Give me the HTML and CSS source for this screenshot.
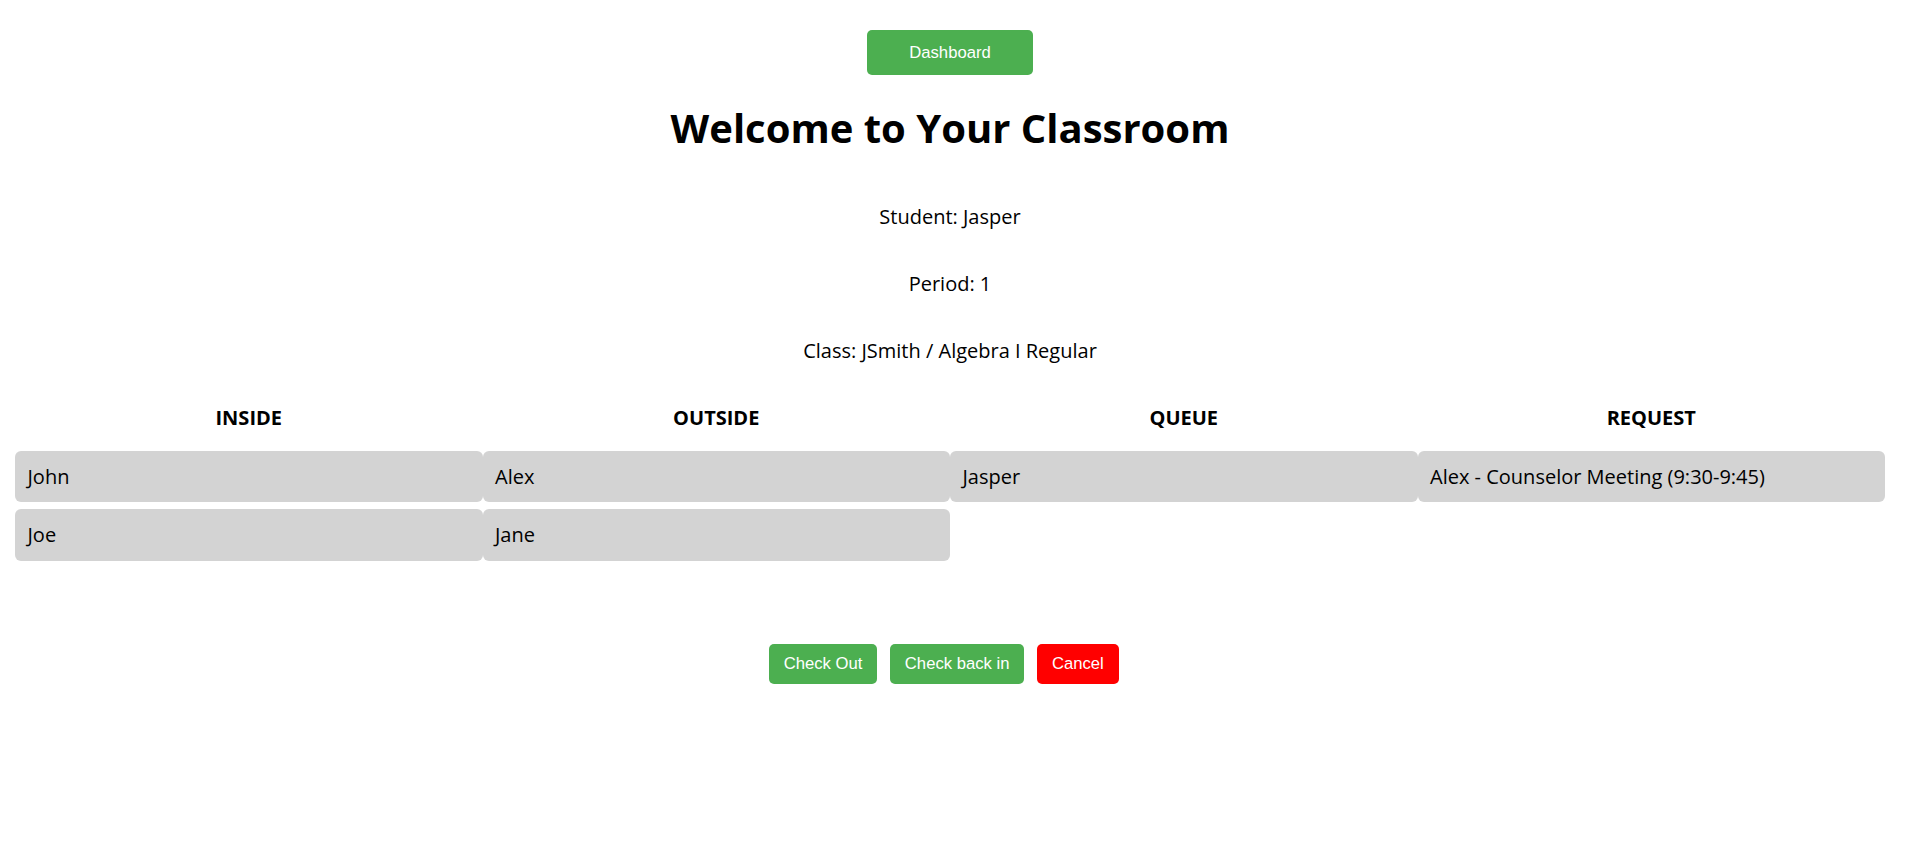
FILE: index.html
```html
<!DOCTYPE html>
<html lang="en">
<head>
<meta charset="utf-8">
<title>Welcome to Your Classroom</title>
<link rel="stylesheet" href="styles.css">
</head>
<body>
<div class="page">
  <div class="top">
    <button class="btn btn-green btn-dash">Dashboard</button>
  </div>
  <h1 class="title">Welcome to Your Classroom</h1>
  <div class="info">
    <p>Student: Jasper</p>
    <p>Period: 1</p>
    <p>Class: JSmith / Algebra I Regular</p>
  </div>
  <div class="board">
    <div class="col">
      <div class="col-head">INSIDE</div>
      <div class="cell">John</div>
      <div class="cell">Joe</div>
    </div>
    <div class="col">
      <div class="col-head">OUTSIDE</div>
      <div class="cell">Alex</div>
      <div class="cell">Jane</div>
    </div>
    <div class="col">
      <div class="col-head">QUEUE</div>
      <div class="cell">Jasper</div>
    </div>
    <div class="col">
      <div class="col-head">REQUEST</div>
      <div class="cell">Alex - Counselor Meeting (9:30-9:45)</div>
    </div>
  </div>
  <div class="actions">
    <button class="btn btn-green">Check Out</button>
    <button class="btn btn-green">Check back in</button>
    <button class="btn btn-red">Cancel</button>
  </div>
</div>
</body>
</html>
```
FILE: styles.css
```css
html, body {
  margin: 0;
  padding: 0;
  background: #ffffff;
}

body {
  font-family: "Open Sans", "Noto Sans", sans-serif;
  color: #000000;
}

.page {
  padding: 30px 25px 0 15px;
}

.top {
  display: flex;
  justify-content: center;
}

.btn {
  font-family: "Liberation Sans", Arial, sans-serif;
  font-size: 16.67px;
  line-height: 20px;
  color: #ffffff;
  border: none;
  border-radius: 5px;
  padding: 10px 15px;
  cursor: pointer;
}

.btn-green {
  background: #4caf50;
}

.btn-red {
  background: #ff0000;
}

.btn-dash {
  padding: 12.5px 42.5px;
}

.title {
  margin: 25.5px 0 48px;
  font-size: 40px;
  line-height: 54.5px;
  font-weight: 700;
  text-align: center;
}

.info p {
  margin: 0 0 39.7px;
  font-size: 20px;
  line-height: 27.25px;
  text-align: center;
}

.board {
  display: grid;
  grid-template-columns: repeat(4, 1fr);
  align-items: start;
}

.col {
  display: flex;
  flex-direction: column;
}

.col-head {
  font-size: 20px;
  line-height: 27.25px;
  font-weight: 700;
  text-align: center;
  margin-bottom: 20px;
}

.cell {
  background: #d3d3d3;
  border-radius: 6px;
  padding: 12px 12.5px;
  font-size: 20px;
  line-height: 27.25px;
  margin-bottom: 7px;
}

.actions {
  display: flex;
  justify-content: center;
  margin-top: 76.5px;
}

.actions .btn {
  margin-right: 12.5px;
}
```
